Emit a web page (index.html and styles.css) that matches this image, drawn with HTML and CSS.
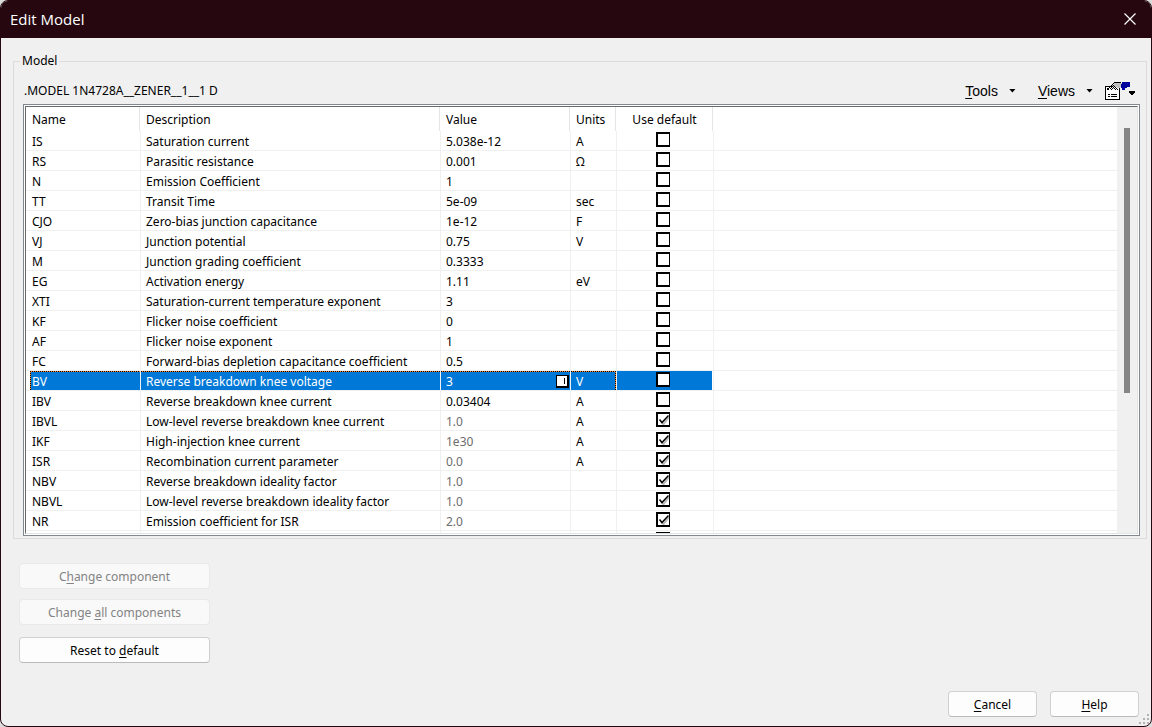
FILE: index.html
```html
<!DOCTYPE html>
<html lang="en">
<head>
<meta charset="utf-8">
<title>Edit Model</title>
<link rel="stylesheet" href="styles.css">
</head>
<body>
<main class="dialog">
  <header class="titlebar">
    <h1 class="title">Edit Model</h1>
    <button class="close" type="button" aria-label="Close">
      <svg width="12" height="12" viewBox="0 0 12 12"><path d="M0.5 0.5L11.5 11.5M11.5 0.5L0.5 11.5" stroke="#fff" stroke-width="1.2" fill="none"/></svg>
    </button>
  </header>
  <fieldset class="group">
    <legend class="legend">Model</legend>
    <div class="group-body">
      <div class="toolbar">
        <span class="model-name">.MODEL 1N4728A__ZENER__1__1 D</span>
        <button class="tool" type="button"><span><u>T</u>ools</span><i class="caret"></i></button>
        <button class="tool" type="button"><span><u>V</u>iews</span><i class="caret"></i></button>
        <button class="tool-icon" type="button" aria-label="Properties">
          <svg width="31" height="18" viewBox="0 0 31 18" shape-rendering="crispEdges">
            <path d="M0 4h15v14H0z" fill="#000"/><path d="M1 5h13v12H1z" fill="#fff"/>
            <path d="M2 6h2v2H2zM3 12h2v1H3zM6 12h6v1H6zM3 14h2v1H3zM6 14h6v1H6z" fill="#000"/>
            <path d="M9 1h8v4h-2v1h-3V5H7V3h2z" fill="#c0c0c0"/>
            <path d="M9 0h7v1H9zM8 1h1v1H8zM7 2h1v1H7zM6 3h1v1H6zM5 4h1v1H5zM4 5h1v1H4zM8 3h1v1H8zM7 4h1v1H7zM6 5h1v1H6zM5 6h1v1H5zM9 4h1v1H9zM8 5h1v1H8zM7 6h1v1H7zM6 7h1v1H6zM10 5h1v1h-1zM9 6h1v1H9zM11 6h1v1h-1zM10 7h1v1h-1zM12 7h1v1h-1z" fill="#000"/>
            <path d="M17 0h8v5h-3v1h-2v2h-3V6h-1V2h1z" fill="#00009c"/>
            <path d="M24 9h6v2h-1v1h-1v1h-2v-1h-1v-1h-1z" fill="#000"/>
          </svg>
        </button>
      </div>
      <div class="list">
        <div class="list-view">
          <table class="params">
            <colgroup><col class="c-name"><col class="c-desc"><col class="c-value"><col class="c-units"><col class="c-default"><col></colgroup>
            <thead><tr><th>Name</th><th>Description</th><th>Value</th><th>Units</th><th class="center">Use default</th><th class="rest"></th></tr></thead>
            <tbody id="rows"></tbody>
          </table>
          <div class="scroll"><div class="thumb"></div></div>
        </div>
      </div>
    </div>
  </fieldset>
  <div class="actions">
    <button class="btn" type="button" disabled><span>C<u>h</u>ange component</span></button>
    <button class="btn" type="button" disabled><span>Change <u>a</u>ll components</span></button>
    <button class="btn reset" type="button"><span>Reset to <u>d</u>efault</span></button>
  </div>
  <footer class="footer">
    <button class="btn small" type="button"><span><u>C</u>ancel</span></button>
    <button class="btn small" type="button"><span><u>H</u>elp</span></button>
  </footer>
  <svg class="grip" width="11" height="11" viewBox="0 0 11 11" shape-rendering="crispEdges"><path d="M8 0h2v2H8zM4 4h2v2H4zM8 4h2v2H8zM0 8h2v2H0zM4 8h2v2H4zM8 8h2v2H8z" fill="#b4b4b4"/></svg>
</main>
<script src="script.js"></script>
</body>
</html>
```
FILE: styles.css
```css
* { box-sizing: border-box; }
body {
  margin: 0;
  background: #dcdcdc;
  color: #000;
  font: 12px/16px "Noto Sans", sans-serif;
}
button { font: inherit; color: inherit; margin: 0; padding: 0; border: 0; background: none; }
.dialog {
  position: relative;
  display: flex;
  flex-direction: column;
  min-height: 100vh;
  background: #f0f0f0;
  border: 1px solid #26070f;
  border-radius: 8px;
  overflow: hidden;
}
.titlebar {
  display: flex;
  align-items: center;
  justify-content: space-between;
  height: 37px;
  padding: 0 15px 2px 9px;
  background: #26070f;
  color: #fff;
}
.title { margin: 0; font: 15px/20px "Open Sans", sans-serif; }
.close { display: flex; }
.group {
  margin: 15px 4px 0 12px;
  padding: 0 6px 2px 9px;
  border: 1px solid #dcdcdc;
  min-width: 0;
}
.legend { margin-left: -3px; padding: 0 2px; }
.toolbar { display: flex; align-items: center; height: 35px; padding-top: 8px; }
.model-name { flex: 1; padding-left: 1px; }
.tool { display: flex; align-items: center; gap: 11px; margin-right: 22px; font: 14px/16px "Liberation Sans", sans-serif; }
.caret { width: 7px; height: 4px; background: #000; clip-path: polygon(0 0, 100% 0, 50% 100%); }
.tool-icon { display: flex; margin-right: 4px; }
.tool + .tool { margin-right: 12px; }
.list { border: 1px solid #828790; padding: 1px; background: #fff; }
.list-view {
  display: flex;
  height: 428px;
  overflow: hidden;
  border: 1px solid;
  border-color: #696969 #e3e3e3 #e3e3e3 #696969;
}
.params { flex: 1; align-self: flex-start; width: 100%; table-layout: fixed; border-spacing: 0; }
.c-name { width: 115px; }
.c-desc { width: 300px; }
.c-value { width: 130px; }
.c-units { width: 46px; }
.c-default { width: 97px; }
th { height: 24px; padding: 2px 5px 0; text-align: left; font-weight: normal; background: linear-gradient(#e5e5e5, #e5e5e5) right 1px top 0 / 1px 100% no-repeat; }
td { height: 20px; padding: 2px 5px 0; border-right: 1px solid #f0f0f0; border-bottom: 1px solid #f0f0f0; line-height: 16px; white-space: nowrap; }
th:first-child, td:first-child { padding-left: 6px; }
td:last-child { border-right: 0; }
.rest { background: none; }
th.center { padding: 2px 2px 0 0; text-align: center; }
.muted { color: #6d6d6d; }
.check {
  display: block;
  appearance: none;
  width: 14px;
  height: 15px;
  margin: 0 auto;
  border: solid #000;
  border-width: 2px 1px 2px 2px;
  background: #fff;
}
td.center { padding: 1px 4px 0 0; vertical-align: top; }
.check:checked {
  background: #fff url("data:image/svg+xml,%3Csvg xmlns='http://www.w3.org/2000/svg' width='11' height='11' viewBox='0 0 11 11'%3E%3Cpath d='M3 8L5.500 10L11 3' fill='none' stroke='%23b8b8b8' stroke-width='2'/%3E%3Cpath d='M1.500 5.500L4 8.500L10.500 1.500' fill='none' stroke='%23000' stroke-width='1.500'/%3E%3C/svg%3E") 0 0 no-repeat;
}
.selected td:not(:last-child) {
  color: #fff;
  background: repeating-linear-gradient(90deg, #000 0 1px, #ff8728 1px 2px) 0 0 / 100% 1px no-repeat, #0078d7;
  background-clip: padding-box;
}
.selected td:first-child {
  background: repeating-linear-gradient(#000 0 1px, #ff8728 1px 2px) 4px 0 / 1px 100% no-repeat,
    repeating-linear-gradient(90deg, #000 0 1px, #ff8728 1px 2px) 4px 0 / 100% 1px no-repeat,
    linear-gradient(#0078d7, #0078d7) 4px 0 / 100% 100% no-repeat;
  background-clip: padding-box;
}
.selected td:nth-child(4) {
  background: repeating-linear-gradient(#000 0 1px, #ff8728 1px 2px) right 0 top 0 / 1px 100% no-repeat,
    repeating-linear-gradient(90deg, #000 0 1px, #ff8728 1px 2px) 0 0 / 100% 1px no-repeat, #0078d7;
  background-clip: padding-box;
}
.selected td:nth-child(5) {
  background: linear-gradient(#fff, #fff) right 0 top 0 / 1px 100% no-repeat, #0078d7;
  background-clip: padding-box;
}
.edit-cell { display: flex; align-items: center; justify-content: space-between; margin-right: -4px; }
.more { width: 13px; height: 13px; border: solid #000; border-width: 1px 2px 2px 1px; background: linear-gradient(#000, #000) 7px 2px / 1px 6px no-repeat #fff; }
.scroll { flex: none; width: 20px; padding: 21px 7px 0; background: #f0f0f0; }
.thumb { height: 265px; background: #858585; }
.actions { display: flex; flex-direction: column; gap: 10px; padding: 24px 18px 0; }
.btn {
  width: 191px;
  height: 26px;
  padding-top: 2px;
  border: 1px solid #d0d0d0;
  border-bottom-color: #bababa;
  border-radius: 4px;
  background: #fdfdfd;
}
.btn:disabled { color: #838383; border-color: #e9e9e9; background: #f9f9f9; }
.reset { margin-top: 2px; }
.footer { display: flex; justify-content: flex-end; gap: 13px; margin-top: auto; padding: 0 12px 9px; }
.small { width: 89px; }
u { text-underline-offset: 2px; text-decoration-thickness: 1px; }
.grip { position: absolute; right: 1px; bottom: 1px; }
```
FILE: script.js
```js
const rows = [
  ["IS", "Saturation current", "5.038e-12", "A"],
  ["RS", "Parasitic resistance", "0.001", "Ω"],
  ["N", "Emission Coefficient", "1", ""],
  ["TT", "Transit Time", "5e-09", "sec"],
  ["CJO", "Zero-bias junction capacitance", "1e-12", "F"],
  ["VJ", "Junction potential", "0.75", "V"],
  ["M", "Junction grading coefficient", "0.3333", ""],
  ["EG", "Activation energy", "1.11", "eV"],
  ["XTI", "Saturation-current temperature exponent", "3", ""],
  ["KF", "Flicker noise coefficient", "0", ""],
  ["AF", "Flicker noise exponent", "1", ""],
  ["FC", "Forward-bias depletion capacitance coefficient", "0.5", ""],
  ["BV", "Reverse breakdown knee voltage", "3", "V"],
  ["IBV", "Reverse breakdown knee current", "0.03404", "A"],
  ["IBVL", "Low-level reverse breakdown knee current", "1.0", "A", true],
  ["IKF", "High-injection knee current", "1e30", "A", true],
  ["ISR", "Recombination current parameter", "0.0", "A", true],
  ["NBV", "Reverse breakdown ideality factor", "1.0", "", true],
  ["NBVL", "Low-level reverse breakdown ideality factor", "1.0", "", true],
  ["NR", "Emission coefficient for ISR", "2.0", "", true],
  ["", "", "", "", true]
];
document.getElementById("rows").innerHTML = rows.map(([name, desc, value, units, isDefault]) => {
  const selected = name === "BV";
  const cell = selected
    ? `<div class="edit-cell">${value}<button class="more" type="button" aria-label="Edit value"></button></div>`
    : value;
  return `<tr${selected ? ' class="selected"' : ""}><td>${name}</td><td>${desc}</td>` +
    `<td${isDefault ? ' class="muted"' : ""}>${cell}</td><td>${units}</td>` +
    `<td class="center"><input class="check" type="checkbox" aria-label="Use default ${name}"${isDefault ? " checked" : ""}></td><td></td></tr>`;
}).join("");
```
